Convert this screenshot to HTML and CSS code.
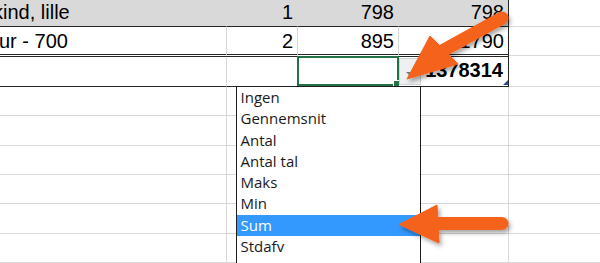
FILE: index.html
```html
<!DOCTYPE html>
<html lang="da">
<head>
<meta charset="utf-8">
<title>Sum</title>
<link rel="stylesheet" href="styles.css">
</head>
<body>
<div class="sheet">
  <div class="row r1">
    <div class="cell a"><span class="shift-k">kind, lille</span></div>
    <div class="cell b num">1</div>
    <div class="cell c num">798</div>
    <div class="cell d num">798</div>
    <div class="cell e"></div>
  </div>
  <div class="row r2">
    <div class="cell a"><span class="shift-u">ur - 700</span></div>
    <div class="cell b num">2</div>
    <div class="cell c num">895</div>
    <div class="cell d num">1790</div>
    <div class="cell e"></div>
  </div>
  <div class="row r3">
    <div class="cell a"></div>
    <div class="cell b"></div>
    <div class="cell c"></div>
    <div class="cell d num total">1378314</div>
    <div class="cell e"></div>
  </div>
  <div class="row blank"><div class="cell a"></div><div class="cell b"></div><div class="cell c"></div><div class="cell d"></div><div class="cell e"></div></div>
  <div class="row blank"><div class="cell a"></div><div class="cell b"></div><div class="cell c"></div><div class="cell d"></div><div class="cell e"></div></div>
  <div class="row blank"><div class="cell a"></div><div class="cell b"></div><div class="cell c"></div><div class="cell d"></div><div class="cell e"></div></div>
  <div class="row blank"><div class="cell a"></div><div class="cell b"></div><div class="cell c"></div><div class="cell d"></div><div class="cell e"></div></div>
  <div class="row blank"><div class="cell a"></div><div class="cell b"></div><div class="cell c"></div><div class="cell d"></div><div class="cell e"></div></div>
  <div class="row blank"><div class="cell a"></div><div class="cell b"></div><div class="cell c"></div><div class="cell d"></div><div class="cell e"></div></div>
</div>

<div class="selection"><span class="handle"></span></div>
<div class="table-corner"></div>
<div class="dd-button"><span class="dd-caret"></span></div>

<ul class="dd-list">
  <li>Ingen</li>
  <li>Gennemsnit</li>
  <li>Antal</li>
  <li>Antal tal</li>
  <li>Maks</li>
  <li>Min</li>
  <li class="active">Sum</li>
  <li>Stdafv</li>
  <li>Varians</li>
</ul>

<svg class="arrows" width="600" height="263" viewBox="0 0 600 263" xmlns="http://www.w3.org/2000/svg">
  <defs>
    <filter id="sh" x="-20%" y="-20%" width="140%" height="140%">
      <feDropShadow dx="2" dy="3" stdDeviation="2" flood-color="#000" flood-opacity="0.35"/>
    </filter>
  </defs>
  <g filter="url(#sh)" fill="#f5621a" stroke="#f5621a">
    <line x1="444" y1="50" x2="502" y2="18" stroke-width="13" stroke-linecap="round"/>
    <polygon points="407,79 430,36 458,64" stroke-width="1" stroke-linejoin="round"/>
  </g>
  <g filter="url(#sh)" fill="#f5621a" stroke="#f5621a">
    <line x1="434" y1="223.5" x2="502" y2="223.5" stroke-width="13" stroke-linecap="round"/>
    <polygon points="399,224.5 437,205 439,243" stroke-width="1" stroke-linejoin="round"/>
  </g>
</svg>
</body>
</html>
```

FILE: styles.css
```css
html, body {
  margin: 0;
  padding: 0;
}
body {
  width: 600px;
  height: 263px;
  overflow: hidden;
  position: relative;
  background: #ffffff;
  font-family: "Liberation Sans", Arial, sans-serif;
  color: #000;
}

.sheet {
  display: flex;
  flex-direction: column;
}
.row {
  display: flex;
  align-items: flex-start;
}
.cell {
  box-sizing: border-box;
  border-right: 1px solid #d9d9d9;
  border-bottom: 1px solid #d9d9d9;
  font-size: 20px;
  line-height: 22px;
  white-space: nowrap;
  overflow: hidden;
}
.a { width: 227px; }
.b { width: 71px; }
.c { width: 101px; }
.d { width: 110px; }
.e { flex: 1; border-right: none; }
.num {
  text-align: right;
  padding-right: 4px;
}

.shift-k { display: inline-block; margin-left: -7px; }
.shift-u { display: inline-block; margin-left: -1px; }

/* row 1: shaded band */
.r1 .cell {
  height: 27px;
  padding-top: 1.4px;
  background: #d9d9d9;
  border-right-color: #d9d9d9;
  border-bottom: 1px solid #262626;
}
.r1 .d { border-right-color: #262626; }
.r1 .e {
  background: #fff;
  border-bottom-color: #d9d9d9;
}

/* row 2: double bottom border */
.r2 .cell {
  height: 30px;
  padding-top: 3.4px;
  border-bottom: 3px double #262626;
}
.r2 .d { border-right-color: #262626; }
.r2 .e {
  height: 29px;
  border-bottom: 1px solid #d9d9d9;
}

/* row 3: totals */
.r3 .cell {
  height: 30px;
  padding-top: 1.8px;
  border-bottom: 1px solid #262626;
}
.r3 .d { border-right-color: #262626; padding-right: 5px; }
.r3 .e { border-bottom-color: #d9d9d9; }
.total { font-weight: bold; }

.blank .cell { height: 29.33px; }

/* overlays */
.selection {
  position: absolute;
  left: 297px;
  top: 56px;
  width: 102px;
  height: 30px;
  box-sizing: border-box;
  border: 2px solid #217346;
}
.handle {
  position: absolute;
  right: -3px;
  bottom: -3px;
  width: 5px;
  height: 5px;
  background: #217346;
  border: 1px solid #fff;
}
.table-corner {
  position: absolute;
  left: 503px;
  top: 80px;
  width: 0;
  height: 0;
  border-left: 5px solid transparent;
  border-bottom: 5px solid #2d4a8c;
}
.dd-button {
  position: absolute;
  left: 399px;
  top: 58px;
  width: 22px;
  height: 27px;
  box-sizing: border-box;
  background: #eff0f2;
  border: 1px solid #d0d3d8;
  display: flex;
  justify-content: center;
  align-items: center;
  padding-top: 4px;
}
.dd-caret {
  width: 0;
  height: 0;
  border-left: 4.5px solid transparent;
  border-right: 4.5px solid transparent;
  border-top: 4px solid #7a7a7a;
}

.dd-list {
  position: absolute;
  left: 236px;
  top: 86px;
  width: 185px;
  height: 200px;
  box-sizing: border-box;
  margin: 0;
  padding: 0;
  list-style: none;
  background: #fff;
  border: 1px solid #1e1e1e;
  font-family: "Open Sans", "Noto Sans", sans-serif;
  font-size: 15px;
  line-height: 21.3px;
  color: #1a1a1a;
}
.dd-list li {
  padding-left: 3.5px;
  height: 21.3px;
}
.dd-list li.active {
  background: #3399ff;
  color: #fff;
}

.arrows {
  position: absolute;
  left: 0;
  top: 0;
  pointer-events: none;
}
```
